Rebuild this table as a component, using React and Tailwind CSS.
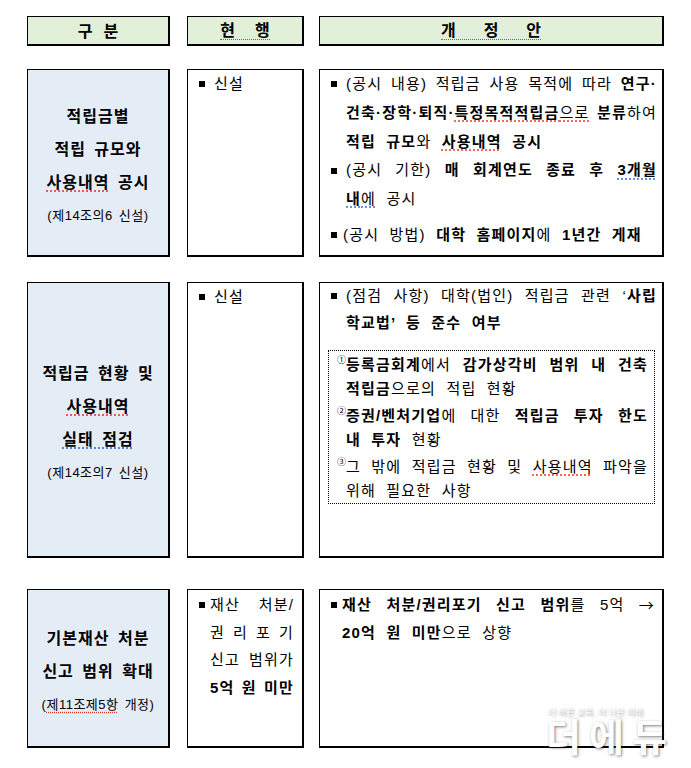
import clsx from 'clsx';

// Inline marks used in the cell texts below:
//   *bold*   ~red spell-check dots~   ^blue grammar dots^
function parse(str) {
  const segs = [];
  let cur = { t: '', b: false, r: false, u: false };
  for (const ch of str) {
    if (ch === '*' || ch === '~' || ch === '^') {
      if (cur.t) segs.push(cur);
      cur = {
        t: '',
        b: ch === '*' ? !cur.b : cur.b,
        r: ch === '~' ? !cur.r : cur.r,
        u: ch === '^' ? !cur.u : cur.u,
      };
    } else {
      cur.t += ch;
    }
  }
  if (cur.t) segs.push(cur);
  return segs;
}

function Seg({ s }) {
  return (
    <span
      className={clsx(
        s.b && 'font-bold',
        s.t === '→' && "font-['Noto_Sans_CJK_KR',sans-serif]",
        s.r && 'underline decoration-[#e23b2e] decoration-dotted underline-offset-[3px]',
        s.u && 'underline decoration-[#2f6fe0] decoration-dotted underline-offset-[3px]'
      )}
    >
      {s.t}
    </span>
  );
}

function Plain({ text, className }) {
  return (
    <div className={clsx('whitespace-nowrap', className)}>
      {parse(text).map((s, i) => (
        <Seg key={i} s={s} />
      ))}
    </div>
  );
}

// A justified line, hwp style: words pushed edge to edge.
function Spread({ text }) {
  const words = [[]];
  for (const s of parse(text)) {
    s.t.split(' ').forEach((part, i) => {
      if (i > 0) words.push([]);
      if (part) words[words.length - 1].push({ ...s, t: part });
    });
  }
  return (
    <div className="-mr-[1px] flex justify-between whitespace-nowrap">
      {words.map((w, i) => (
        <span key={i}>
          {w.map((s, j) => (
            <Seg key={j} s={s} />
          ))}
        </span>
      ))}
    </div>
  );
}

function Item({ gutter, className, children }) {
  return (
    <div className={clsx('flex', className)}>
      <span className={clsx('flex h-[1lh] shrink-0 items-center', gutter)}>
        <span className="h-[6px] w-[6px] bg-black" />
      </span>
      <div className="min-w-0 flex-1">{children}</div>
    </div>
  );
}

function Numbered({ n, className, children }) {
  return (
    <div className={clsx('flex', className)}>
      <span className="h-[1lh] w-[9px] shrink-0 pt-[3px] text-[9px] leading-none tracking-normal">{n}</span>
      <div className="min-w-0 flex-1">{children}</div>
    </div>
  );
}

function Cell({ className, children }) {
  return (
    <div className={clsx('border-b-2 border-l border-r-2 border-t border-black', className)}>
      {children}
    </div>
  );
}

function Label({ lines, note }) {
  return (
    <Cell className="flex w-[143px] flex-col items-center justify-center bg-[#e4ecf6] pt-[6px] text-[16px] font-bold leading-[33px] tracking-[1px] [word-spacing:3px]">
      {lines.map((l) => (
        <Plain key={l} text={l} />
      ))}
      <Plain text={note} className="text-[13px] font-normal tracking-[0.5px] [word-spacing:2px]" />
    </Cell>
  );
}

export default function App() {
  return (
    <div className="relative h-[768px] w-[691px] overflow-hidden bg-white pl-[27px] pt-[16px] font-['Liberation_Sans','Noto_Sans_CJK_KR',sans-serif] text-black">
      {/* header */}
      <div className="flex h-[30px] text-[16px] font-bold leading-[16px]">
        <Cell className="flex w-[143px] items-center justify-center bg-[#e2efd9] pt-[2px]">
          <div className="flex gap-[11px]">
            <span>구</span>
            <span>분</span>
          </div>
        </Cell>
        <Cell className="ml-[17px] flex w-[117px] items-center justify-center bg-[#e2efd9] pt-[2px]">
          <div className="flex gap-[20px] border-b border-dotted border-[#2f6fe0]">
            <span>현</span>
            <span>행</span>
          </div>
        </Cell>
        <Cell className="ml-[15px] flex w-[345px] items-center justify-center bg-[#e2efd9] pt-[2px]">
          <div className="flex gap-[28px] border-b border-dotted border-[#2f6fe0]">
            <span>개</span>
            <span>정</span>
            <span>안</span>
          </div>
        </Cell>
      </div>

      {/* 적립금별 공시 */}
      <div className="mt-[23px] flex h-[188px] text-[15px] tracking-[1.2px] [word-spacing:5px]">
        <Label lines={['적립금별', '적립 규모와', '~사용내역~ 공시']} note="(제14조의6  신설)" />
        <Cell className="ml-[17px] w-[117px] pl-[11px] leading-[28px]">
          <Item gutter="w-[15px]">
            <Plain text="신설" />
          </Item>
        </Cell>
        <Cell className="ml-[15px] w-[345px] pl-[11px] pr-[6px] leading-[28.8px]">
          <Item gutter="w-[15px]">
            <Spread text="(공시 내용) 적립금 사용 목적에 따라 *연구·*" />
            <Spread text="*건축·장학·퇴직·~특정목적적립금*으로~ *분류*하여" />
            <Plain text="*적립 규모*와 *~사용내역~ 공시*" />
          </Item>
          <Item gutter="w-[15px]">
            <Spread text="(공시 기한) *매 회계연도 종료 후 ^3개월^*" />
            <Plain text="^*내*에^ 공시" />
          </Item>
          <Item gutter="w-[12px]" className="mt-[7px]">
            <Plain text="(공시 방법) *대학 홈페이지*에 *1년간 게재*" />
          </Item>
        </Cell>
      </div>

      {/* 실태 점검 */}
      <div className="mt-[25px] flex h-[276px] text-[15px] tracking-[1.2px] [word-spacing:5px]">
        <Label lines={['적립금 현황 및', '~사용내역~', '^실태 점검^']} note="(제14조의7  신설)" />
        <Cell className="ml-[17px] w-[117px] pl-[11px] leading-[28px]">
          <Item gutter="w-[15px]">
            <Plain text="신설" />
          </Item>
        </Cell>
        <Cell className="ml-[15px] w-[345px] pl-[11px] pr-[6px] leading-[27px]">
          <Item gutter="w-[15px]" className="-mt-[1px]">
            <Spread text="(점검 사항) 대학(법인) 적립금 관련 ‘*사립*" />
            <Plain text="*학교법’ 등 준수 여부*" />
          </Item>
          <div className="-ml-[3px] mr-[1px] mt-[14px] border border-dotted border-black pl-[8px] pr-[7px] pt-[2px] leading-[24px]">
            <Numbered n="①">
              <Spread text="*등록금회계*에서 *감가상각비 범위 내 건축*" />
              <Plain text="*적립금*으로의 적립 현황" />
            </Numbered>
            <Numbered n="②" className="mt-[3px]">
              <Spread text="*증권/벤처기업*에 대한 *적립금 투자 한도*" />
              <Plain text="*내 투자* 현황" />
            </Numbered>
            <Numbered n="③" className="mt-[3px]">
              <Spread text="그 밖에 적립금 현황 및 ~사용내역~ 파악을" />
              <Plain text="위해 필요한 사항" />
            </Numbered>
          </div>
        </Cell>
      </div>

      {/* 기본재산 처분 */}
      <div className="mt-[31px] flex h-[159px] text-[15px] tracking-[1.2px] [word-spacing:5px]">
        <Label lines={['기본재산 처분', '신고 범위 확대']} note="(~제11조제5항~ 개정)" />
        <Cell className="ml-[17px] w-[117px] pl-[11px] pr-[9px] pt-[1px] leading-[27.7px]">
          <Item gutter="w-[11px]">
            <Spread text="재산 처분/" />
            <Spread text="권 리 포 기" />
            <Spread text="신고 범위가" />
            <Spread text="*5억 원 미만*" />
          </Item>
        </Cell>
        <Cell className="ml-[15px] w-[345px] pl-[11px] pr-[8px] pt-[1px] leading-[27px]">
          <Item gutter="w-[11px]">
            <Spread text="*재산 처분/권리포기 신고 범위*를 5억 →" />
            <Plain text="*20억 원 미만*으로 상향" />
          </Item>
        </Cell>
      </div>

      {/* press watermark */}
      <div className="pointer-events-none absolute left-[546px] top-[708px] flex flex-col text-white [text-shadow:1px_1px_3px_rgba(0,0,0,0.5)]">
        <span className="pl-[2px] text-[8px] leading-[9px] tracking-[0.5px] text-white/90">더 바른 교육, 더 나은 미래</span>
        <span className="mt-[3px] text-[38px] font-bold leading-[36px] tracking-[8px]">더에듀</span>
      </div>
    </div>
  );
}
